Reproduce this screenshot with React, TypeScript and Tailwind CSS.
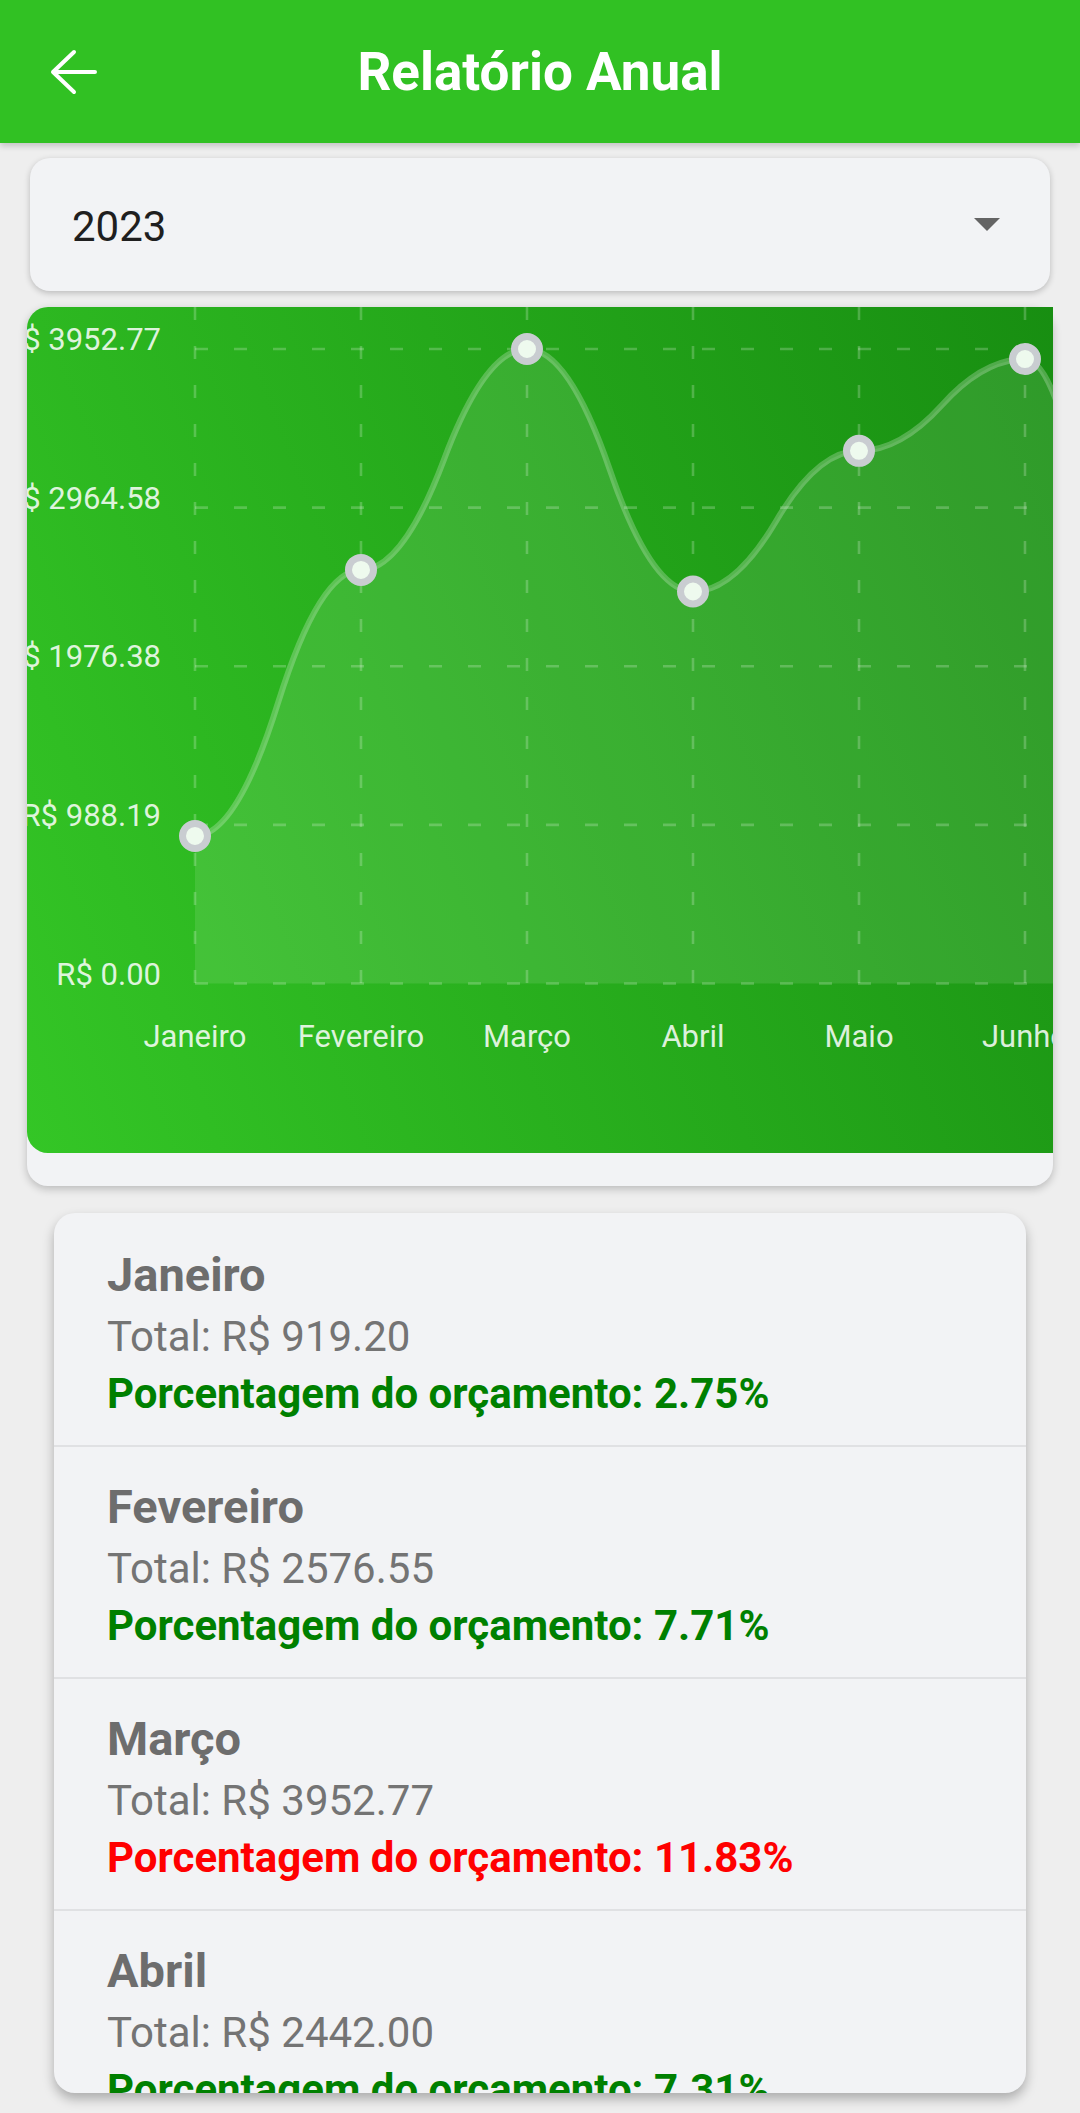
import React from "react";

const MAX = 3952.77;
const data = [919.2, 2576.55, 3952.77, 2442.0, 3318.4, 3890.15, 210.0, 1450.3, 1820.6, 2210.45, 1675.9, 2980.1];
const months = [
  "Janeiro",
  "Fevereiro",
  "Março",
  "Abril",
  "Maio",
  "Junho",
  "Julho",
  "Agosto",
  "Setembro",
  "Outubro",
  "Novembro",
  "Dezembro",
];
const yLabels = ["R$ 3952.77", "R$ 2964.58", "R$ 1976.38", "R$ 988.19", "R$ 0.00"];

const W = 2160;
const H = 846;
const PR = 168;
const PT = 42;
const drawH = (H * 3) / 4;
const step = (W - PR) / 12;
const xOf = (i: number) => PR + i * step;
const yOf = (v: number) => PT + drawH * (1 - v / MAX);
const zeroY = PT + drawH;

function linePath() {
  let d = `M${xOf(0)},${yOf(data[0])}`;
  for (let i = 0; i < data.length - 1; i++) {
    const x0 = xOf(i);
    const x1 = xOf(i + 1);
    const y0 = yOf(data[i]);
    const y1 = yOf(data[i + 1]);
    const xm = (x0 + x1) / 2;
    const ym = (y0 + y1) / 2;
    const c1 = (xm + x0) / 2;
    const c2 = (xm + x1) / 2;
    d += ` Q${c1},${y0} ${xm},${ym} Q${c2},${y1} ${x1},${y1}`;
  }
  return d;
}

function Chart() {
  const line = linePath();
  const fill = `${line} L${xOf(data.length - 1)},${zeroY} L${xOf(0)},${zeroY} Z`;
  return (
    <svg width={W} height={H} viewBox={`0 0 ${W} ${H}`} className="block">
      <defs>
        <linearGradient id="bg" gradientUnits="userSpaceOnUse" x1="0" y1={H} x2={W} y2="0">
          <stop offset="0" stopColor="#34c626" />
          <stop offset="1" stopColor="#005f00" />
        </linearGradient>
      </defs>
      <rect x="0" y="0" width={W} height={H} fill="url(#bg)" />
      {[0, 1, 2, 3, 4].map((i) => {
        const y = PT + (drawH * i) / 4;
        return (
          <line
            key={"h" + i}
            x1={PR}
            x2={W}
            y1={y}
            y2={y}
            stroke="#ffffff"
            strokeOpacity="0.22"
            strokeWidth="2.6"
            strokeDasharray="13 26"
          />
        );
      })}
      {data.map((_, i) => (
        <line
          key={"v" + i}
          x1={xOf(i)}
          x2={xOf(i)}
          y1={0}
          y2={zeroY}
          stroke="#ffffff"
          strokeOpacity="0.22"
          strokeWidth="2.6"
          strokeDasharray="13 26"
        />
      ))}
      <path d={fill} fill="#ffffff" fillOpacity="0.1" />
      <path d={line} fill="none" stroke="#ffffff" strokeOpacity="0.24" strokeWidth="6" />
      {data.map((v, i) => (
        <circle
          key={"c" + i}
          cx={xOf(i)}
          cy={yOf(v)}
          r="12.5"
          fill="#eefaee"
          stroke="#c9cdd1"
          strokeWidth="7"
        />
      ))}
      {yLabels.map((t, i) => (
        <text
          key={"yl" + i}
          x={134}
          y={PT + (drawH * i) / 4 + 1}
          textAnchor="end"
          fontFamily="Roboto, sans-serif"
          fontSize="31"
          fill="#ffffff"
          fillOpacity="0.85"
        >
          {t}
        </text>
      ))}
      {months.map((m, i) => (
        <text
          key={"xl" + i}
          x={xOf(i)}
          y={740}
          textAnchor="middle"
          fontFamily="Roboto, sans-serif"
          fontSize="31"
          fill="#ffffff"
          fillOpacity="0.85"
        >
          {m}
        </text>
      ))}
    </svg>
  );
}

const rows = [
  { m: "Janeiro", total: "919.20", pct: "2.75", red: false },
  { m: "Fevereiro", total: "2576.55", pct: "7.71", red: false },
  { m: "Março", total: "3952.77", pct: "11.83", red: true },
  { m: "Abril", total: "2442.00", pct: "7.31", red: false },
  { m: "Maio", total: "3318.40", pct: "9.93", red: false },
  { m: "Junho", total: "3890.15", pct: "11.64", red: true },
];

export default function App() {
  return (
    <div className="w-[1080px] h-[2113px] overflow-hidden bg-[#eeeeee] [font-family:Roboto,sans-serif] flex flex-col">
      <header className="relative z-10 h-[143px] shrink-0 bg-[#31c123] flex items-center px-[50px] shadow-[0_3px_6px_rgba(0,0,0,0.18)]">
        <svg width="48" height="46" viewBox="0 0 48 46" className="shrink-0">
          <path
            d="M3 23 H45 M24 3 L3 23 L24 43"
            fill="none"
            stroke="#ffffff"
            strokeWidth="4"
            strokeLinecap="round"
            strokeLinejoin="round"
          />
        </svg>
        <h1 className="flex-1 text-center text-white font-bold text-[53px] leading-[62px]">Relatório Anual</h1>
        <div className="w-[48px] shrink-0" />
      </header>

      <div className="mx-[30px] mt-[15px] h-[133px] shrink-0 rounded-[20px] bg-[#f2f3f5] shadow-[0_2px_6px_rgba(0,0,0,0.22)] flex items-center justify-between pl-[42px] pr-[50px]">
        <span className="mt-[4px] text-[42px] leading-[49px] text-[#1f1f1f]">2023</span>
        <svg width="26" height="13" viewBox="0 0 26 13">
          <polygon points="0,0 26,0 13,13" fill="#646464" />
        </svg>
      </div>

      <div className="mx-[27px] mt-[16px] h-[879px] shrink-0 rounded-[21px] bg-[#f2f3f5] shadow-[0_3px_8px_rgba(0,0,0,0.22)]">
        <div className="h-[846px] overflow-hidden rounded-l-[21px]">
          <Chart />
        </div>
      </div>

      <div className="mx-[54px] mt-[27px] h-[880px] shrink-0 overflow-hidden rounded-[21px] bg-[#f2f3f5] pt-[2px] shadow-[0_6px_12px_rgba(0,0,0,0.28)]">
        {rows.map((r) => (
          <div key={r.m} className="h-[232px] border-b-2 border-[#e0e1e3] pl-[53px] pt-[32px]">
            <div className="text-[47px] leading-[55px] font-bold text-[#6d6d6d]">{r.m}</div>
            <div className="mt-[10px] text-[42px] leading-[49px] text-[#747474]">Total: R$ {r.total}</div>
            <div
              className={
                r.red
                  ? "mt-[8px] text-[42px] leading-[49px] font-bold text-[#ff0000]"
                  : "mt-[8px] text-[42px] leading-[49px] font-bold text-[#008000]"
              }
            >
              Porcentagem do orçamento: {r.pct}%
            </div>
          </div>
        ))}
      </div>
    </div>
  );
}
